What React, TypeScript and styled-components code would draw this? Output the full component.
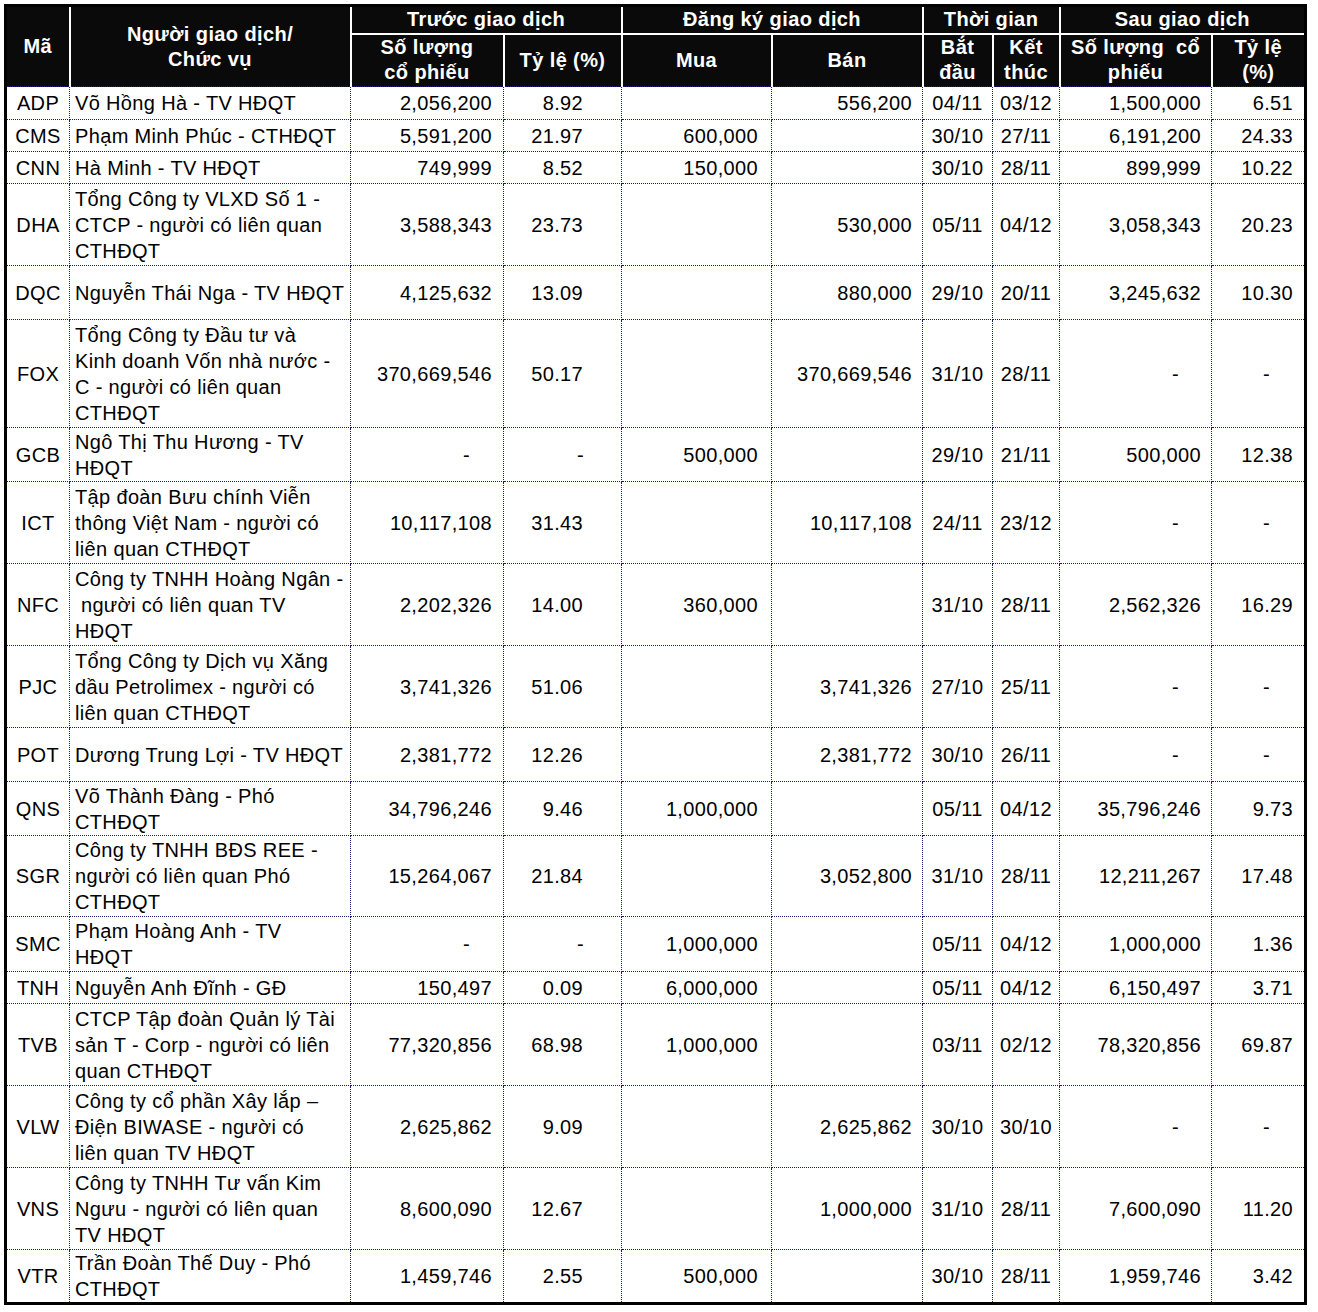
import React from "react";
import styled, { createGlobalStyle } from "styled-components";

type Align = "left" | "center" | "right";

interface IRow {
  code: string;
  name: string;
  beforeQty: string;
  beforePct: string;
  buy: string;
  sell: string;
  start: string;
  end: string;
  afterQty: string;
  afterPct: string;
  h: number;
}

interface IColumn {
  key: keyof IRow;
  align: Align;
  pad: number;
  dashPad?: number;
}

const columns: IColumn[] = [
  { key: "code", align: "center", pad: 0 },
  { key: "name", align: "left", pad: 5 },
  { key: "beforeQty", align: "right", pad: 11, dashPad: 33 },
  { key: "beforePct", align: "right", pad: 38, dashPad: 37 },
  { key: "buy", align: "right", pad: 13 },
  { key: "sell", align: "right", pad: 10 },
  { key: "start", align: "center", pad: 0 },
  { key: "end", align: "center", pad: 0 },
  { key: "afterQty", align: "right", pad: 10, dashPad: 32 },
  { key: "afterPct", align: "right", pad: 11, dashPad: 34 },
];

const widths = [64, 281, 153, 118, 150, 151, 70, 67, 152, 94];

const rows: IRow[] = [
  { code: "ADP", name: "Võ Hồng Hà - TV HĐQT", beforeQty: "2,056,200", beforePct: "8.92", buy: "", sell: "556,200", start: "04/11", end: "03/12", afterQty: "1,500,000", afterPct: "6.51", h: 33 },
  { code: "CMS", name: "Phạm Minh Phúc - CTHĐQT", beforeQty: "5,591,200", beforePct: "21.97", buy: "600,000", sell: "", start: "30/10", end: "27/11", afterQty: "6,191,200", afterPct: "24.33", h: 32 },
  { code: "CNN", name: "Hà Minh - TV HĐQT", beforeQty: "749,999", beforePct: "8.52", buy: "150,000", sell: "", start: "30/10", end: "28/11", afterQty: "899,999", afterPct: "10.22", h: 32 },
  { code: "DHA", name: "Tổng Công ty VLXD Số 1 -\nCTCP - người có liên quan\nCTHĐQT", beforeQty: "3,588,343", beforePct: "23.73", buy: "", sell: "530,000", start: "05/11", end: "04/12", afterQty: "3,058,343", afterPct: "20.23", h: 82 },
  { code: "DQC", name: "Nguyễn Thái Nga - TV HĐQT", beforeQty: "4,125,632", beforePct: "13.09", buy: "", sell: "880,000", start: "29/10", end: "20/11", afterQty: "3,245,632", afterPct: "10.30", h: 54 },
  { code: "FOX", name: "Tổng Công ty Đầu tư và\nKinh doanh Vốn nhà nước -\nC - người có liên quan\nCTHĐQT", beforeQty: "370,669,546", beforePct: "50.17", buy: "", sell: "370,669,546", start: "31/10", end: "28/11", afterQty: "-", afterPct: "-", h: 108 },
  { code: "GCB", name: "Ngô Thị Thu Hương - TV\nHĐQT", beforeQty: "-", beforePct: "-", buy: "500,000", sell: "", start: "29/10", end: "21/11", afterQty: "500,000", afterPct: "12.38", h: 54 },
  { code: "ICT", name: "Tập đoàn Bưu chính Viễn\nthông Việt Nam - người có\nliên quan CTHĐQT", beforeQty: "10,117,108", beforePct: "31.43", buy: "", sell: "10,117,108", start: "24/11", end: "23/12", afterQty: "-", afterPct: "-", h: 82 },
  { code: "NFC", name: "Công ty TNHH Hoàng Ngân -\n người có liên quan TV\nHĐQT", beforeQty: "2,202,326", beforePct: "14.00", buy: "360,000", sell: "", start: "31/10", end: "28/11", afterQty: "2,562,326", afterPct: "16.29", h: 82 },
  { code: "PJC", name: "Tổng Công ty Dịch vụ Xăng\ndầu Petrolimex - người có\nliên quan CTHĐQT", beforeQty: "3,741,326", beforePct: "51.06", buy: "", sell: "3,741,326", start: "27/10", end: "25/11", afterQty: "-", afterPct: "-", h: 82 },
  { code: "POT", name: "Dương Trung Lợi - TV HĐQT", beforeQty: "2,381,772", beforePct: "12.26", buy: "", sell: "2,381,772", start: "30/10", end: "26/11", afterQty: "-", afterPct: "-", h: 54 },
  { code: "QNS", name: "Võ Thành Đàng - Phó\nCTHĐQT", beforeQty: "34,796,246", beforePct: "9.46", buy: "1,000,000", sell: "", start: "05/11", end: "04/12", afterQty: "35,796,246", afterPct: "9.73", h: 54 },
  { code: "SGR", name: "Công ty TNHH BĐS REE -\nngười có liên quan Phó\nCTHĐQT", beforeQty: "15,264,067", beforePct: "21.84", buy: "", sell: "3,052,800", start: "31/10", end: "28/11", afterQty: "12,211,267", afterPct: "17.48", h: 81 },
  { code: "SMC", name: "Phạm Hoàng Anh - TV\nHĐQT", beforeQty: "-", beforePct: "-", buy: "1,000,000", sell: "", start: "05/11", end: "04/12", afterQty: "1,000,000", afterPct: "1.36", h: 55 },
  { code: "TNH", name: "Nguyễn Anh Đĩnh - GĐ", beforeQty: "150,497", beforePct: "0.09", buy: "6,000,000", sell: "", start: "05/11", end: "04/12", afterQty: "6,150,497", afterPct: "3.71", h: 32 },
  { code: "TVB", name: "CTCP Tập đoàn Quản lý Tài\nsản T - Corp - người có liên\nquan CTHĐQT", beforeQty: "77,320,856", beforePct: "68.98", buy: "1,000,000", sell: "", start: "03/11", end: "02/12", afterQty: "78,320,856", afterPct: "69.87", h: 82 },
  { code: "VLW", name: "Công ty cổ phần Xây lắp –\nĐiện BIWASE - người có\nliên quan TV HĐQT", beforeQty: "2,625,862", beforePct: "9.09", buy: "", sell: "2,625,862", start: "30/10", end: "30/10", afterQty: "-", afterPct: "-", h: 82 },
  { code: "VNS", name: "Công ty TNHH Tư vấn Kim\nNgưu - người có liên quan\nTV HĐQT", beforeQty: "8,600,090", beforePct: "12.67", buy: "", sell: "1,000,000", start: "31/10", end: "28/11", afterQty: "7,600,090", afterPct: "11.20", h: 82 },
  { code: "VTR", name: "Trần Đoàn Thế Duy - Phó\nCTHĐQT", beforeQty: "1,459,746", beforePct: "2.55", buy: "500,000", sell: "", start: "30/10", end: "28/11", afterQty: "1,959,746", afterPct: "3.42", h: 54 },
];

const App: React.FC = () => {
  return (
    <Page>
      <GlobalStyle />
      <Table>
        <colgroup>
          {widths.map((w, i) => (
            <col key={i} style={{ width: w }} />
          ))}
        </colgroup>
        <thead>
          <HeadRow $h={28}>
            <Th rowSpan={2}>Mã</Th>
            <Th rowSpan={2}>{"Người giao dịch/\nChức vụ"}</Th>
            <Th colSpan={2} $split>
              Trước giao dịch
            </Th>
            <Th colSpan={2} $split>
              Đăng ký giao dịch
            </Th>
            <Th colSpan={2} $split>
              Thời gian
            </Th>
            <Th colSpan={2} $split $last>
              Sau giao dịch
            </Th>
          </HeadRow>
          <HeadRow $h={53}>
            <Th>{"Số lượng\ncổ phiếu"}</Th>
            <Th>Tỷ lệ (%)</Th>
            <Th>Mua</Th>
            <Th>Bán</Th>
            <Th>{"Bắt\nđầu"}</Th>
            <Th>{"Kết\nthúc"}</Th>
            <Th>{"Số lượng  cổ\nphiếu"}</Th>
            <Th $last>{"Tỷ lệ\n(%)"}</Th>
          </HeadRow>
        </thead>
        <tbody>
          {rows.map((row) => (
            <BodyRow key={row.code} $h={row.h}>
              {columns.map((col) => {
                const value = row[col.key] as string;
                const isDash = value === "-";
                return (
                  <Td
                    key={col.key}
                    $align={col.align}
                    $pad={isDash && col.dashPad ? col.dashPad : col.pad}
                  >
                    {value}
                  </Td>
                );
              })}
            </BodyRow>
          ))}
        </tbody>
      </Table>
    </Page>
  );
};

export default App;

const GlobalStyle = createGlobalStyle`
  html, body {
    margin: 0;
    padding: 0;
    background: #ffffff;
  }
  body {
    font-family: "Liberation Sans", Arial, sans-serif;
    color: #000000;
  }
`;

const Page = styled.div`
  padding: 4px;
  width: 1318px;
  box-sizing: border-box;
`;

const Table = styled.table`
  border-collapse: collapse;
  table-layout: fixed;
  width: 1300px;
  border: 3px solid #000000;
`;

const HeadRow = styled.tr<{ $h: number }>`
  height: ${({ $h }) => $h}px;
`;

const Th = styled.th<{ $split?: boolean; $last?: boolean }>`
  background: #0a0a0a;
  color: #ffffff;
  font-family: "Liberation Sans", Arial, sans-serif;
  font-weight: bold;
  font-size: 20px;
  line-height: 25px;
  letter-spacing: 0.4px;
  text-align: center;
  vertical-align: middle;
  white-space: pre;
  padding: 0;
  border-left: 2px solid #ffffff;
  border-top: none;
  border-bottom: ${({ $split }) => ($split ? "2px solid #ffffff" : "none")};
  border-right: ${({ $last }) => ($last ? "none" : "2px solid #ffffff")};

  &:first-child {
    border-left: none;
  }
`;

const BodyRow = styled.tr<{ $h: number }>`
  height: ${({ $h }) => $h}px;
`;

const Td = styled.td<{ $align: Align; $pad: number }>`
  border: 1px dotted #10236e;
  font-size: 20px;
  line-height: 26px;
  letter-spacing: 0.35px;
  text-align: ${({ $align }) => $align};
  vertical-align: middle;
  white-space: pre;
  padding: 0 ${({ $pad, $align }) => ($align === "right" ? $pad : 2)}px 0
    ${({ $pad, $align }) => ($align === "left" ? $pad : 2)}px;
  overflow: hidden;
`;
